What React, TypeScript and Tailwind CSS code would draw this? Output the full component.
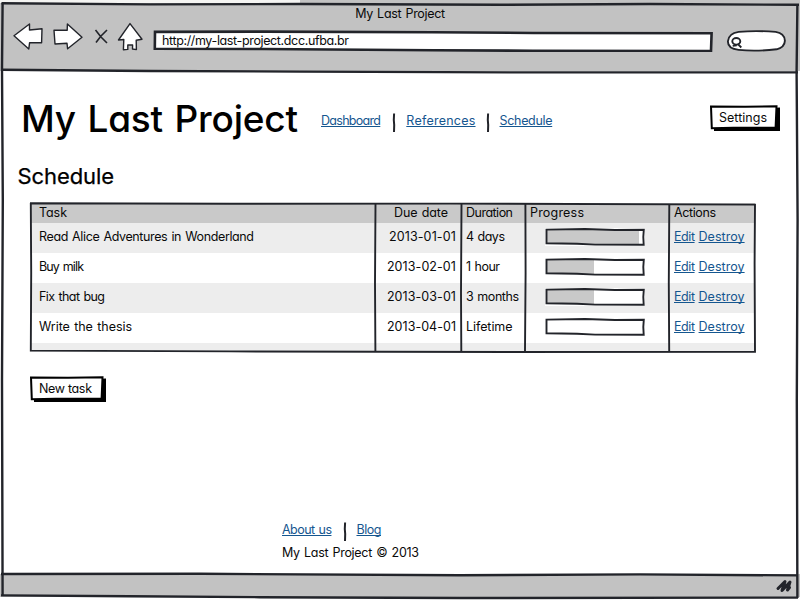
import { useLayoutEffect, useRef, useState } from "react";
import type { ReactNode } from "react";

const INK = "#22242a";

type LabelProps = { children: string; width: number; className?: string };

// One line of text, tracked so that it fills the given width.
function Label({ children, width, className = "" }: LabelProps) {
  const ref = useRef<HTMLSpanElement>(null);
  const [spacing, setSpacing] = useState(0);
  useLayoutEffect(() => {
    const el = ref.current;
    if (!el) return;
    el.style.letterSpacing = "0px";
    const natural = el.getBoundingClientRect().width;
    const next = (width - natural) / (children.length - 1);
    el.style.letterSpacing = `${next}px`;
    setSpacing(next);
  }, [children, width]);
  return (
    <span ref={ref} className={`inline-block self-start justify-self-start whitespace-nowrap ${className}`} style={{ letterSpacing: `${spacing}px` }}>
      {children}
    </span>
  );
}

function Link({ children, width, className = "" }: LabelProps) {
  return (
    <a href="#" className={`block shrink-0 text-[#15568f] ${className}`}>
      <Label width={width} className="underline decoration-1 underline-offset-[1px] [text-decoration-skip-ink:none]">{children}</Label>
    </a>
  );
}

function Separator({ className = "" }: { className?: string }) {
  return (
    <svg className={`h-5 w-1 shrink-0 ${className}`} viewBox="0 0 4 20" fill="none" stroke={INK} strokeWidth="2">
      <path d="M2.1 0.5 L1.8 7 L2.2 12 L2 19" />
    </svg>
  );
}

function SketchButton({ children, width, className = "" }: { children: ReactNode; width: number; className?: string }) {
  return (
    <button className={`relative flex h-[26px] shrink-0 items-start ${className}`}>
      <svg className="absolute inset-0 h-full w-full" viewBox={`0 0 ${width} 26`} fill="none">
        <path d={`M4 5 L${width} 2.5 V26 H4 Z`} fill="#000" />
        <path d={`M1 1.4 L${width / 2} 1.8 L${width - 3.5} 1.2 L${width - 4.4} 22.6 L${width / 3} 22.8 L1.8 23.2 Z`} fill="#fff" stroke="#000" strokeWidth="2" />
      </svg>
      <span className="relative">{children}</span>
    </button>
  );
}

function Progress({ value, className = "" }: { value: number; className?: string }) {
  return (
    <div className={`relative h-[18px] w-[100px] ${className}`}>
      <div className="h-full bg-white p-px">
        <div className="h-[15px] bg-[#c9c9c9]" style={{ width: `${value}%` }} />
      </div>
      <svg className="absolute inset-0" width="100" height="18" fill="none" stroke={INK} strokeWidth="1.9">
        <path d="M1.5 1.6 L40 1 L70 2 L98.8 1.8 L98.3 9 L98.7 16.8 L50 16.6 L32 15.8 L1.5 15.2 Z" />
      </svg>
    </div>
  );
}

const rows = [
  { task: "Read Alice Adventures in Wonderland", tw: 215, date: "2013-01-01", dw: 67, duration: "4 days", uw: 39, value: 95 },
  { task: "Buy milk", tw: 45, date: "2013-02-01", dw: 69, duration: "1 hour", uw: 34, value: 49 },
  { task: "Fix that bug", tw: 66, date: "2013-03-01", dw: 69, duration: "3 months", uw: 53, value: 49 },
  { task: "Write the thesis", tw: 93, date: "2013-04-01", dw: 69, duration: "Lifetime", uw: 46.5, value: 0 },
];

const columns = "grid grid-cols-[345px_86px_64px_144px_86px]";

function Toolbar() {
  return (
    <header className="relative flex h-[71px] shrink-0 flex-col bg-[#c2c2c2]">
      <div className="h-[3px] w-[300px] shrink-0 bg-[#f4f4f2]" />
      <div className="flex justify-center pt-[3px]">
        <Label width={90}>My Last Project</Label>
      </div>
      <div className="flex items-start pl-3">
        <svg width="136" height="30" viewBox="12 22 136 30" className="shrink-0" fill="#fff" stroke={INK} strokeWidth="1.4" strokeLinejoin="round">
          <path d="M14 35.8 L29.5 24 L29.5 30 L42 28.7 L41.6 42.7 L29.6 42.6 L28.8 49 Z" />
          <path d="M54 30.2 L67.2 30.2 L67.4 24 L82 37.3 L67.6 48.8 L67 43.2 L55 44 Z" />
          <path d="M95.5 30 L101 37 L107 43 M107 30 L101 36 L96 42.4" fill="none" strokeWidth="1.6" />
          <path d="M130 23.6 L142 39.2 L136.2 40.2 L136.4 49.6 L132.5 49 L132.6 45 L127.8 45 L127.8 49.4 L123.4 49.8 L123.8 39.5 L118.5 40 Z" />
        </svg>
        <div className="relative ml-[5px] mt-2 flex h-[22px] w-[560px] shrink-0 pl-[9px] pt-[3px]">
          <svg className="absolute inset-0" width="560" height="22" fill="#fff" stroke={INK} strokeWidth="2.6">
            <path d="M2 1.9 L110 1.6 L280 2.2 L380 3 L558.6 3.2 L558 21 L380 20.8 L280 20.2 L110 19 L1.8 18.8 Z" />
          </svg>
          <Label width={187} className="relative">http://my-last-project.dcc.ufba.br</Label>
        </div>
        <svg className="ml-[13px] mt-2 shrink-0" width="60" height="22" viewBox="726.3 29.7 60 22" fill="#fff" stroke={INK} strokeWidth="1.9">
          <path d="M739 31.6 Q756 30 776 31.6 Q785 33 785.2 40.5 Q785 47 777 49 Q756 51.4 739 49.6 Q728 48.5 728.2 41 Q729 33 739 31.6 Z" />
          <ellipse cx="736.6" cy="41" rx="4" ry="3.3" />
          <path d="M738 43.5 L741.6 47.2 M733 45.6 L737 45" fill="none" />
        </svg>
      </div>
    </header>
  );
}

function WindowFrame() {
  return (
    <svg className="pointer-events-none absolute inset-0" width="800" height="600" fill="none" stroke={INK} strokeWidth="2.4">
      <path d="M1.5 3.2 L150 4.4 L300 4 L500 4.8 L650 4 L799 4.8" />
      <path d="M2.6 3 L2 70 L2.8 200 L2 380 L2.6 596" />
      <path d="M797.4 4 L796.6 72 L797.6 220 L796.8 400 L797.4 598" />
      <path d="M1 69.8 L150 71 L300 71.6 L520 72.4 L798 72.4" />
      <path d="M1 574 L200 573.8 L460 575.2 L640 574.4 L798 575.4" />
      <path d="M1 595.4 L130 596.2 L260 597.2 L460 598 L798 597.6" />
    </svg>
  );
}

export default function App() {
  return (
    <div className="relative flex h-[600px] w-[800px] flex-col overflow-hidden bg-white font-['Inter','Liberation_Sans',sans-serif] text-[12.5px] leading-4 text-[#0a0a0a] [font-feature-settings:'cv11'] [word-spacing:1px]">
      <Toolbar />
      <main className="flex h-[503px] shrink-0 flex-col">
        <div className="flex h-[80px] items-start pl-[21px] pt-[24px]">
          <h1 className="w-[300px] text-[37px] font-medium leading-[48px] text-black [word-spacing:2px]">
            <Label width={277}>My Last Project</Label>
          </h1>
          <nav className="flex flex-1 pt-[18px]">
            <Link width={60}>Dashboard</Link>
            <Separator className="ml-[12px]" />
            <Link width={69} className="ml-[10px]">References</Link>
            <Separator className="ml-[10px]" />
            <Link width={53} className="ml-[10px]">Schedule</Link>
          </nav>
          <SketchButton width={70} className="mr-5 mt-[10px] w-[70px] pl-[9px] pt-[5px]">
            <Label width={48}>Settings</Label>
          </SketchButton>
        </div>
        <h2 className="ml-[17.5px] mt-[11px] h-[29px] text-[22px] leading-7 text-black [-webkit-text-stroke:0.25px_black]">
          <Label width={96.5}>Schedule</Label>
        </h2>
        <section className="relative ml-[30px] mt-[12px] h-[149px] w-[725px] shrink-0">
          <div className={`${columns} h-5 bg-[#c9c9c9] pt-0.5`}>
            <Label width={28} className="ml-[9px]">Task</Label>
            <Label width={54} className="ml-[19px]">Due date</Label>
            <Label width={47} className="ml-[5px]">Duration</Label>
            <Label width={54} className="ml-[5px]">Progress</Label>
            <Label width={42} className="ml-[5px]">Actions</Label>
          </div>
          {rows.map((row) => (
            <div key={row.task} className={`${columns} h-[30px] pt-[6px] odd:bg-white even:bg-[#ededed]`}>
              <div className="pl-[9px]"><Label width={row.tw}>{row.task}</Label></div>
              <div className="flex justify-end pr-[5px]"><Label width={row.dw}>{row.date}</Label></div>
              <div className="pl-[5px]"><Label width={row.uw}>{row.duration}</Label></div>
              <Progress value={row.value} className="ml-[20px] -mt-px" />
              <div className="flex gap-1 pl-[5px]">
                <Link width={21}>Edit</Link>
                <Link width={46}>Destroy</Link>
              </div>
            </div>
          ))}
          <div className="h-[9px] bg-[#ededed]" />
          <svg className="absolute inset-0 overflow-visible" width="725" height="149" fill="none" stroke={INK} strokeWidth="1.9">
            <path d="M0 .3 L200 .8 L420 .6 L725 1.6 L724.6 60 L725 148.8 L480 149 L200 148.4 L.8 147.6 L1.2 70 L.8 0" />
            <path d="M345.5 1 L345 80 L345.4 148 M431.5 1 L431 90 L431.3 148 M495.4 1 L495.6 70 L495 148 M639.3 1 L638.8 80 L639.2 148" />
          </svg>
        </section>
        <SketchButton width={76} className="ml-[30px] mt-[24px] w-[76px] pl-[9px] pt-[5px]">
          <Label width={53}>New task</Label>
        </SketchButton>
        <footer className="mt-auto flex flex-col pb-[13px] pl-[282px]">
          <div className="flex h-[23px]">
            <Link width={50}>About us</Link>
            <Separator className="ml-[12px]" />
            <Link width={25} className="ml-[9px]">Blog</Link>
          </div>
          <Label width={137}>My Last Project © 2013</Label>
        </footer>
      </main>
      <div className="flex h-[23px] shrink-0 justify-end bg-[#c2c2c2] pr-[7px] pt-1">
        <svg width="18" height="16" fill="none" stroke={INK} strokeWidth="3" strokeLinecap="round" strokeLinejoin="round">
          <path d="M3 10.5 L10 3.5 L7 12.5 L15 4 L12.5 12 L14.5 9.5" />
        </svg>
      </div>
      <WindowFrame />
    </div>
  );
}
